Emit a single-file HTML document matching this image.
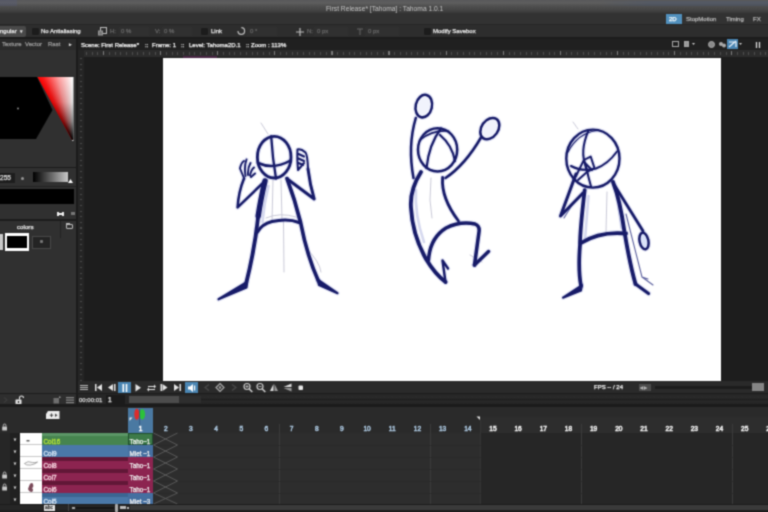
<!DOCTYPE html>
<html><head><meta charset="utf-8"><title>First Release* [Tahoma] : Tahoma 1.0.1</title>
<style>
html,body{margin:0;padding:0;background:#262626;}
body{width:768px;height:512px;overflow:hidden;position:relative;font-family:"Liberation Sans",sans-serif;font-size:7px;color:#e0e0e0;}
.a{position:absolute;}
.t{position:absolute;white-space:nowrap;line-height:8px;height:8px;font-size:6px;color:#e6e6e6;-webkit-text-stroke:0.25px currentColor;}
.d{color:#666;}
.cb{position:absolute;width:7px;height:7px;background:#1c1c1c;border-radius:1px;}
#wrap{position:absolute;left:0;top:0;width:768px;height:512px;overflow:hidden;filter:url(#blr);}
svg{position:absolute;left:0;top:0;}
</style></head><body>
<svg width="0" height="0" style="position:absolute"><filter id="blr" x="0" y="0" width="100%" height="100%" color-interpolation-filters="sRGB"><feConvolveMatrix order="3" kernelMatrix="0.04 0.12 0.04 0.12 0.36 0.12 0.04 0.12 0.04" edgeMode="duplicate" preserveAlpha="true"/></filter></svg>
<div id="wrap">

<div class="a" style="left:0;top:0;width:768px;height:13px;background:linear-gradient(#58585a,#5e5e5e 22%,#505050 45%,#454545 75%,#383838);"></div>
<div class="a" style="left:0;top:0;width:17px;height:6px;background:rgba(80,90,140,0.22);"></div>
<div class="a" style="left:600px;top:1px;width:168px;height:5px;background:linear-gradient(90deg,rgba(60,80,120,0),rgba(60,80,120,0.25) 30%);"></div>
<div class="t" style="left:326px;top:5px;color:#c4c4c4;font-size:6.7px;-webkit-text-stroke:0;">First Release* [Tahoma] : Tahoma 1.0.1</div>
<div class="a" style="left:0;top:13px;width:768px;height:12px;background:#323232;"></div>
<div class="a" style="left:665.5px;top:14.3px;width:16px;height:9.5px;background:#5190bd;"></div>
<div class="t" style="left:669px;top:15px;color:#fff;">2D</div>
<div class="t" style="left:686px;top:15px;color:#b4b4b4;">StopMotion</div>
<div class="t" style="left:726px;top:15px;color:#b4b4b4;">Timing</div>
<div class="t" style="left:753px;top:15px;color:#b4b4b4;">FX</div>

<div class="a" style="left:0;top:24px;width:768px;height:14px;background:#2d2d2d;"></div>
<div class="a" style="left:0;top:24px;width:768px;height:1px;background:#262626;"></div>
<div class="a" style="left:0;top:26px;width:26px;height:11px;background:#494949;border-radius:0 2px 2px 0;"></div>
<div class="t" style="left:0;top:27px;">ngular</div>
<div class="t" style="left:20px;top:27px;font-size:5px;">&#9662;</div>
<div class="cb" style="left:32px;top:28px;"></div>
<div class="t" style="left:41px;top:27px;">No Antialiasing</div>
<div class="t d" style="left:110px;top:27px;">H:</div>
<div class="a" style="left:119px;top:27px;width:30px;height:9px;background:#303030;"></div>
<div class="t d" style="left:121px;top:27px;">0 %</div>
<div class="t d" style="left:155px;top:27px;">V:</div>
<div class="a" style="left:162px;top:27px;width:30px;height:9px;background:#303030;"></div>
<div class="t d" style="left:164px;top:27px;">0 %</div>
<div class="cb" style="left:201px;top:28px;"></div>
<div class="t" style="left:211px;top:27px;">Link</div>
<div class="a" style="left:247px;top:27px;width:30px;height:9px;background:#303030;"></div>
<div class="t d" style="left:250px;top:27px;">0 °</div>
<div class="t d" style="left:307px;top:27px;">N:</div>
<div class="a" style="left:314px;top:27px;width:34px;height:9px;background:#303030;"></div>
<div class="t d" style="left:317px;top:27px;">0 px</div>
<div class="a" style="left:365px;top:27px;width:34px;height:9px;background:#303030;"></div>
<div class="t d" style="left:368px;top:27px;">0 px</div>
<div class="cb" style="left:424px;top:28px;"></div>
<div class="t" style="left:433px;top:27px;">Modify Savebox</div>

<div class="a" style="left:0;top:38px;width:76px;height:12px;background:#2a2a2a;"></div>
<div class="a" style="left:0;top:37px;width:768px;height:1.5px;background:#1b1b1b;"></div>
<div class="a" style="left:78px;top:38px;width:690px;height:12px;background:#202020;"></div>
<div class="a" style="left:0;top:38px;width:768px;height:1px;background:#1c1c1c;"></div>
<div class="t" style="left:2px;top:40px;color:#9a9a9a;">Texture</div>
<div class="t" style="left:25px;top:40px;color:#9a9a9a;">Vector</div>
<div class="t" style="left:48px;top:40px;color:#9a9a9a;">Rast</div>
<div class="t" style="left:69px;top:40px;font-size:5px;color:#ddd;">&#9656;</div>
<div class="t" style="left:81px;top:41px;color:#f0f0f0;">Scene: First Release*</div>
<div class="t" style="left:145px;top:41px;color:#f0f0f0;">::</div>
<div class="t" style="left:152px;top:41px;color:#f0f0f0;">Frame: 1</div>
<div class="t" style="left:181px;top:41px;color:#f0f0f0;">::</div>
<div class="t" style="left:189px;top:41px;color:#f0f0f0;">Level: Tahoma2D.1</div>
<div class="t" style="left:246px;top:41px;color:#f0f0f0;">::</div>
<div class="t" style="left:251px;top:41px;color:#f0f0f0;">Zoom : 113%</div>

<div class="a" style="left:0;top:50px;width:76px;height:344px;background:#303030;"></div>
<div class="a" style="left:76px;top:38px;width:2px;height:368px;background:#1b1b1b;"></div>
<svg width="78" height="150" viewBox="0 0 78 150" style="left:0;top:0;">
 <polygon points="0,77 37,77 52.5,110 36,139 0,139" fill="#000"/>
 <circle cx="18" cy="108.5" r="1" fill="#8a8a8a"/>
 <rect x="72" y="139" width="1.5" height="2" fill="#ccc"/>
</svg>
<div class="a" style="left:37px;top:77px;width:37px;height:63px;clip-path:polygon(0.5px 0,36.5px 0,36.5px 63px,35px 63px);background:linear-gradient(180deg,rgba(0,0,0,0) 0,rgba(0,0,0,0.12) 40%,rgba(0,0,0,0.45) 70%,rgba(0,0,0,0.85) 92%,#000 100%),conic-gradient(from -29.05deg at 35.5px 63px,#ff0000 0deg,#ff1a1a 4deg,#ff9c9c 16deg,#ffffff 29deg,#ffffff 40deg,#ff0000 360deg);"></div>
<div class="a" style="left:0;top:167px;width:76px;height:1px;background:#1a1a1a;"></div>
<div class="a" style="left:0;top:173px;width:15px;height:10px;background:#1d1d1d;"></div>
<div class="t" style="left:0;top:174px;color:#ddd;font-size:6.6px;">255</div>
<div class="a" style="left:21px;top:177px;width:3px;height:3px;border-radius:2px;background:#999;"></div>
<div class="a" style="left:33px;top:172px;width:35px;height:10px;background:linear-gradient(90deg,#000,#1a1a1a 15%,#c8c8c8);"></div>
<svg width="78" height="190" viewBox="0 0 78 190"><polygon points="68,183 70.5,179 73,183" fill="#fff"/></svg>
<div class="a" style="left:0;top:186px;width:76px;height:1px;background:#222;"></div>
<div class="a" style="left:0;top:189px;width:74px;height:15px;background:#000;"></div>
<div class="a" style="left:57px;top:213px;width:7px;height:2px;background:#eee;"></div>
<div class="a" style="left:57px;top:212px;width:2px;height:4px;background:#eee;"></div>
<div class="a" style="left:62px;top:212px;width:2px;height:4px;background:#eee;"></div>
<div class="a" style="left:71px;top:212px;width:4px;height:3px;background:#777;"></div>
<div class="a" style="left:0;top:219px;width:76px;height:2px;background:#1c1c1c;"></div>
<div class="t" style="left:17px;top:223px;color:#e8e8e8;font-size:6.2px;">colors</div>
<div class="a" style="left:60px;top:221px;width:1px;height:17px;background:#222;"></div>
<div class="a" style="left:66px;top:224px;width:7px;height:5px;border:1px solid #bbb;border-radius:1px;box-sizing:border-box;"></div>
<div class="a" style="left:66px;top:223px;width:4px;height:2px;background:#bbb;"></div>
<div class="a" style="left:0;top:234px;width:3px;height:16px;background:#c8c8c8;"></div>
<div class="a" style="left:5px;top:233px;width:24px;height:18px;background:#fff;"></div>
<div class="a" style="left:7px;top:236px;width:20px;height:12px;background:#000;"></div>
<div class="a" style="left:32px;top:236px;width:19px;height:13px;background:#242424;border:1px solid #484848;box-sizing:border-box;"></div>
<div class="a" style="left:40px;top:240px;width:3px;height:3px;background:#777;border-radius:1px;"></div>

<div class="a" style="left:78px;top:50px;width:690px;height:331px;background:#1d1d1d;"></div>
<div class="a" style="left:78px;top:50px;width:690px;height:7px;background:#2c2c2c;"></div>
<div class="a" style="left:78px;top:50px;width:6px;height:331px;background:#252525;"></div>
<div class="a" style="left:85.8px;top:52px;width:683px;height:3px;background:repeating-linear-gradient(90deg,#6a6a6a 0 1px,transparent 1px 5.71px);opacity:.55;"></div>
<div class="a" style="left:102.9px;top:51px;width:665px;height:4px;background:repeating-linear-gradient(90deg,#9a9a9a 0 1.2px,transparent 1.2px 57.1px);opacity:.65;"></div>
<div class="a" style="left:80px;top:58px;width:2px;height:323px;background:repeating-linear-gradient(180deg,#606060 0 1px,transparent 1px 5.65px);opacity:.6;"></div>
<div class="a" style="left:163.3px;top:58.3px;width:557.5px;height:322.4px;background:#fff;"></div>
<div class="a" style="left:183px;top:55.5px;width:34px;height:2.5px;background:rgba(140,40,130,0.35);"></div>
<svg width="768" height="512" viewBox="0 0 768 512" fill="none" stroke="#171b68" stroke-linecap="round" stroke-linejoin="round">
<g stroke="#c4c4d4" stroke-width="0.9">
 <path d="M261 123 L268 134"/>
 <path d="M283.5 222 L284 272"/>
 <path d="M273 180 L272 222 M281 180 L282 220 M266 218 Q280 212 296 217"/>
 <path d="M431 178 L430 200 L432 218"/>
 <path d="M573 122 L578 129"/>
 <path d="M607 192 L606 232"/>
 <path d="M306 248 Q320 262 321 272"/>
 <path d="M470 255 L482 262"/>
</g>
<g stroke="#b4b9e2" stroke-width="2.6" stroke-opacity="0.55">
 <path d="M268.5 186 Q264 204 262.5 222"/>
 <path d="M292 190 Q296 205 298 218"/>
 <path d="M416 190 Q414.5 215 424 242"/>
 <path d="M588.5 196 L585 240"/>
 <path d="M617 196 L621.5 228"/>
</g>
<g stroke="#5d629f" stroke-width="1.1">
 <path d="M564 218 L574 202"/>
 <path d="M626 214 Q635 250 642 277 L653 285 M642 277 L648 279"/>
</g>
<g><ellipse cx="274.2" cy="157.2" rx="16.8" ry="20.8" stroke="#8a92d6" stroke-opacity="0.22" stroke-width="5.2"/><path d="M271.2 136.5 Q272.5 158 276 178.5" stroke="#8a92d6" stroke-opacity="0.22" stroke-width="4.7"/><path d="M258 163 Q273.5 170 290.5 160.5" stroke="#8a92d6" stroke-opacity="0.22" stroke-width="4.9"/><path d="M264.5 181.5 L237.6 207.4 Q238.5 192 244 178.5" stroke="#8a92d6" stroke-opacity="0.22" stroke-width="4.9"/><path d="M244.2 178.5 L240 168.5 Q241 163 244 161 M245.5 176 Q244 166 246.5 159.5 M248 175 Q247.5 168 250.5 163 M250 175.5 Q251 170 254 167.5 M251 177 L255 173.5" stroke="#8a92d6" stroke-opacity="0.22" stroke-width="4.3"/><path d="M288 179.5 L314.2 199 Q310 185 308 169" stroke="#8a92d6" stroke-opacity="0.22" stroke-width="5.3"/><path d="M308 169 Q307.5 155 305.5 152.5 Q301 148.5 297.5 149.5 Q297 158 298 170 L304 163 M298.5 154 L304 156.5 M298.5 158.5 L304 161 M298.5 163 L303 165" stroke="#8a92d6" stroke-opacity="0.22" stroke-width="4.4"/><path d="M265 181 Q260.5 200 258.2 216" stroke="#8a92d6" stroke-opacity="0.22" stroke-width="7.8"/><path d="M258.2 216 Q255 248 246 284" stroke="#8a92d6" stroke-opacity="0.22" stroke-width="6.2"/><path d="M247 282 L218.5 299.3 L246.5 287.5 Z" stroke="#8a92d6" stroke-opacity="0.22" stroke-width="4.6" fill="#8a92d6" fill-opacity="0.22"/><path d="M287 178.5 Q295 200 300.5 222 Q307 256 318.3 280.7" stroke="#8a92d6" stroke-opacity="0.22" stroke-width="6.0"/><path d="M317.5 279.5 L337.5 293.2 L319 285 Z" stroke="#8a92d6" stroke-opacity="0.22" stroke-width="4.6" fill="#8a92d6" fill-opacity="0.22"/><path d="M257.5 232 Q262 224 272 221.5 Q288 218 299 222.5" stroke="#8a92d6" stroke-opacity="0.22" stroke-width="5.4"/></g>
<g><ellipse cx="423.8" cy="106.1" rx="8.1" ry="11.4" transform="rotate(13 423.8 106.1)" stroke="#8a92d6" stroke-opacity="0.22" stroke-width="4.9"/><path d="M415.8 118 Q407.5 146 413.5 178" stroke="#8a92d6" stroke-opacity="0.22" stroke-width="4.9"/><ellipse cx="437.6" cy="149.8" rx="19.6" ry="21.6" stroke="#8a92d6" stroke-opacity="0.22" stroke-width="4.9"/><path d="M441 128.5 Q429 144 426.5 168" stroke="#8a92d6" stroke-opacity="0.22" stroke-width="4.6"/><path d="M440 135 Q452 145 455 161" stroke="#8a92d6" stroke-opacity="0.22" stroke-width="4.6"/><path d="M420 140 Q432 130 448 131" stroke="#8a92d6" stroke-opacity="0.22" stroke-width="4.0"/><ellipse cx="489.8" cy="128.6" rx="8.3" ry="11.6" transform="rotate(35 489.8 128.6)" stroke="#8a92d6" stroke-opacity="0.22" stroke-width="4.9"/><path d="M481 137.5 Q465 165 445.5 178" stroke="#8a92d6" stroke-opacity="0.22" stroke-width="4.9"/><path d="M421 172 Q409.5 190 411 208 Q412.5 235 426 259 Q435 274 445.5 282" stroke="#8a92d6" stroke-opacity="0.22" stroke-width="6.2"/><path d="M445.5 282 L442.5 260.5 L448 268.5" stroke="#8a92d6" stroke-opacity="0.22" stroke-width="4.8"/><path d="M442.6 177.5 Q441 198 458.5 221" stroke="#8a92d6" stroke-opacity="0.22" stroke-width="5.2"/><path d="M428.5 260 Q430 238 446 228 Q460 221 475 224 Q480 226 479 232 L474.5 265" stroke="#8a92d6" stroke-opacity="0.22" stroke-width="5.9"/><path d="M474.5 265 L488.5 251.5" stroke="#8a92d6" stroke-opacity="0.22" stroke-width="5.8"/></g>
<g><ellipse cx="592.9" cy="158.6" rx="26.6" ry="29.0" stroke="#8a92d6" stroke-opacity="0.22" stroke-width="4.8"/><path d="M588.2 131.2 Q579.5 152 586 166 Q588 176 591 186.5" stroke="#8a92d6" stroke-opacity="0.22" stroke-width="4.4"/><path d="M571 166 Q582 172 596 168.5 Q608 164 617 151.5" stroke="#8a92d6" stroke-opacity="0.22" stroke-width="4.4"/><path d="M568 152 Q578 133 597 130.5" stroke="#8a92d6" stroke-opacity="0.22" stroke-width="3.6"/><path d="M583.9 160 L590.7 156.6 L594.5 168.1 L587 172 Z M583.9 160 L576 176 M587 172 L578 180 M585 163 L592 170" stroke="#8a92d6" stroke-opacity="0.22" stroke-width="4.3"/><path d="M576 174 L560.5 216 L583 193" stroke="#8a92d6" stroke-opacity="0.22" stroke-width="5.4"/><path d="M584.7 190 Q580 230 580 245 Q578 270 581 286" stroke="#8a92d6" stroke-opacity="0.22" stroke-width="6.1"/><path d="M582 285 L563 297.7 L581 290.5 Z" stroke="#8a92d6" stroke-opacity="0.22" stroke-width="4.4" fill="#8a92d6" fill-opacity="0.22"/><path d="M613 182 Q620 200 624.5 232 Q630 265 635.5 284" stroke="#8a92d6" stroke-opacity="0.22" stroke-width="6.2"/><path d="M635.5 284 L648.5 293.5" stroke="#8a92d6" stroke-opacity="0.22" stroke-width="5.6"/><path d="M581 243 Q600 231 626 233.5" stroke="#8a92d6" stroke-opacity="0.22" stroke-width="6.2"/><path d="M615 186 L643 231" stroke="#8a92d6" stroke-opacity="0.22" stroke-width="5.2"/><ellipse cx="644" cy="241" rx="4.4" ry="8.4" transform="rotate(-12 644 241)" stroke="#8a92d6" stroke-opacity="0.22" stroke-width="4.9"/></g>
<g><ellipse cx="274.2" cy="157.2" rx="16.8" ry="20.8" stroke-width="2.8"/>
<path d="M271.2 136.5 Q272.5 158 276 178.5" stroke-width="2.3"/>
<path d="M258 163 Q273.5 170 290.5 160.5" stroke-width="2.5"/>
<path d="M264.5 181.5 L237.6 207.4 Q238.5 192 244 178.5" stroke-width="2.5"/>
<path d="M244.2 178.5 L240 168.5 Q241 163 244 161 M245.5 176 Q244 166 246.5 159.5 M248 175 Q247.5 168 250.5 163 M250 175.5 Q251 170 254 167.5 M251 177 L255 173.5" stroke-width="1.9"/>
<path d="M288 179.5 L314.2 199 Q310 185 308 169" stroke-width="2.9"/>
<path d="M308 169 Q307.5 155 305.5 152.5 Q301 148.5 297.5 149.5 Q297 158 298 170 L304 163 M298.5 154 L304 156.5 M298.5 158.5 L304 161 M298.5 163 L303 165" stroke-width="2.0"/>
<path d="M265 181 Q260.5 200 258.2 216" stroke-width="5.4"/>
<path d="M258.2 216 Q255 248 246 284" stroke-width="3.8"/>
<path d="M247 282 L218.5 299.3 L246.5 287.5 Z" stroke-width="2.2" fill="#171b68"/>
<path d="M287 178.5 Q295 200 300.5 222 Q307 256 318.3 280.7" stroke-width="3.6"/>
<path d="M317.5 279.5 L337.5 293.2 L319 285 Z" stroke-width="2.2" fill="#171b68"/>
<path d="M257.5 232 Q262 224 272 221.5 Q288 218 299 222.5" stroke-width="3.0"/></g>
<g><ellipse cx="423.8" cy="106.1" rx="8.1" ry="11.4" transform="rotate(13 423.8 106.1)" stroke-width="2.5" fill="#f1f3fc"/>
<path d="M415.8 118 Q407.5 146 413.5 178" stroke-width="2.5"/>
<ellipse cx="437.6" cy="149.8" rx="19.6" ry="21.6" stroke-width="2.5"/>
<path d="M441 128.5 Q429 144 426.5 168" stroke-width="2.2"/>
<path d="M440 135 Q452 145 455 161" stroke-width="2.2"/>
<path d="M420 140 Q432 130 448 131" stroke-width="1.6"/>
<ellipse cx="489.8" cy="128.6" rx="8.3" ry="11.6" transform="rotate(35 489.8 128.6)" stroke-width="2.5" fill="#f1f3fc"/>
<path d="M481 137.5 Q465 165 445.5 178" stroke-width="2.5"/>
<path d="M421 172 Q409.5 190 411 208 Q412.5 235 426 259 Q435 274 445.5 282" stroke-width="3.8"/>
<path d="M445.5 282 L442.5 260.5 L448 268.5" stroke-width="2.4"/>
<path d="M442.6 177.5 Q441 198 458.5 221" stroke-width="2.8"/>
<path d="M428.5 260 Q430 238 446 228 Q460 221 475 224 Q480 226 479 232 L474.5 265" stroke-width="3.5"/>
<path d="M474.5 265 L488.5 251.5" stroke-width="3.4"/></g>
<g><ellipse cx="592.9" cy="158.6" rx="26.6" ry="29.0" stroke-width="2.4"/>
<path d="M588.2 131.2 Q579.5 152 586 166 Q588 176 591 186.5" stroke-width="2.0"/>
<path d="M571 166 Q582 172 596 168.5 Q608 164 617 151.5" stroke-width="2.0"/>
<path d="M568 152 Q578 133 597 130.5" stroke-width="1.2"/>
<path d="M583.9 160 L590.7 156.6 L594.5 168.1 L587 172 Z M583.9 160 L576 176 M587 172 L578 180 M585 163 L592 170" stroke-width="1.9"/>
<path d="M576 174 L560.5 216 L583 193" stroke-width="3.0"/>
<path d="M584.7 190 Q580 230 580 245 Q578 270 581 286" stroke-width="3.7"/>
<path d="M582 285 L563 297.7 L581 290.5 Z" stroke-width="2.0" fill="#171b68"/>
<path d="M613 182 Q620 200 624.5 232 Q630 265 635.5 284" stroke-width="3.8"/>
<path d="M635.5 284 L648.5 293.5" stroke-width="3.2"/>
<path d="M581 243 Q600 231 626 233.5" stroke-width="3.8"/>
<path d="M615 186 L643 231" stroke-width="2.8"/>
<ellipse cx="644" cy="241" rx="4.4" ry="8.4" transform="rotate(-12 644 241)" stroke-width="2.5" fill="#dbe3fa"/></g>
</svg>
<svg width="768" height="60" viewBox="0 0 768 60">
 <g fill="none" stroke="#a8a8a8" stroke-width="1">
  <rect x="672.5" y="41.5" width="6" height="5"/>
  <rect x="684.5" y="41.5" width="4" height="5" fill="#999"/>
  <path d="M692 43 h3 l-1.5 2z" fill="#ccc" stroke="none"/>
  <circle cx="711.5" cy="44.5" r="3" fill="#888"/>
  <circle cx="721" cy="44" r="2" fill="#aaa" stroke="none"/><circle cx="724" cy="45.5" r="2" fill="#aaa" stroke="none"/>
  <rect x="727" y="39" width="11" height="10" fill="#4a85b2" stroke="none"/>
  <path d="M729 47 L736 41 M729 42 h7 v5" stroke="#e8f0f8" stroke-width="1.2"/>
  <path d="M739 43 h3 l-1.5 2z" fill="#ccc" stroke="none"/>
  <path d="M756.5 42 v6 M759.5 42 v6" stroke="#ddd" stroke-width="1.3"/>
 </g>
</svg>

<svg width="768" height="40" viewBox="0 0 768 40">
 <g fill="none" stroke="#bdbdbd" stroke-width="1">
  <rect x="100.5" y="27.5" width="6" height="6"/>
  <rect x="98.5" y="31" width="4" height="4" fill="#777" stroke="#999"/>
  <path d="M238 31 a3.3 3.3 0 1 0 3.3 -3.3" stroke-width="1.2"/>
  <path d="M300 28 v8 M296 32 h8" stroke-width="1.2"/>
  <path d="M357 29 h6 M360 29 v6" stroke="#666"/>
 </g>
</svg>

<div class="a" style="left:78px;top:381px;width:690px;height:13px;background:#2a2a2a;"></div>
<div class="a" style="left:118px;top:382px;width:13px;height:12px;background:#4a85b2;"></div>
<div class="a" style="left:185px;top:382px;width:13px;height:12px;background:#4a85b2;"></div>
<svg width="768" height="512" viewBox="0 0 768 512">
 <g fill="#e4e4e4" stroke="none">
  <path d="M80 385 h8 v1 h-8z M80 387 h8 v1 h-8z M80 389 h8 v1 h-8z" fill="#bbb"/>
  <path d="M95 384 h1.5 v7 h-1.5z M102 384 v7 l-5 -3.5z"/>
  <path d="M113 384 v7 l-5 -3.5z M114 384 h1.5 v7 h-1.5z"/>
  <path d="M122.5 384 h1.6 v8 h-1.6z M125.700 384 h1.6 v8 h-1.6z" fill="#fff"/>
  <path d="M135.5 384 v7.5 l5.5 -3.750z"/>
  <path d="M148 386 h6 v-1.5 l2 2 l-2 2 v-1.5 h-6z M155 390 h-6 v1.5 l-2 -2 l2 -2 v1.5 h6z"/>
  <path d="M160.5 384 h1.5 v7 h-1.5z M162.5 384 v7 l5 -3.5z"/>
  <path d="M174 384 v7 l5 -3.5z M179.5 384 h1.5 v7 h-1.5z"/>
  <path d="M188 386.5 h2 l3 -2.5 v8 l-3 -2.5 h-2z M194 385.5 h1.2 v5 h-1.2z" fill="#fff"/>
  <path d="M209 384.5 l-4 3 l4 3" fill="none" stroke="#4a4a4a" stroke-width="1.2"/>
  <path d="M220 383.5 l4 4 l-4 4 l-4 -4z" fill="none" stroke="#aaa" stroke-width="1.2"/>
  <rect x="218.8" y="386.3" width="2.4" height="2.4" fill="#999"/>
  <path d="M232 384.5 l4 3 l-4 3" fill="none" stroke="#4a4a4a" stroke-width="1.2"/>
  <circle cx="247" cy="386.5" r="3" fill="none" stroke="#ccc" stroke-width="1.2"/>
  <path d="M249.3 389 l3 3" stroke="#ccc" stroke-width="1.6"/>
  <path d="M245.5 386.5 h3 M247 385 v3" stroke="#ccc" stroke-width="0.8"/>
  <circle cx="260" cy="386.5" r="3" fill="none" stroke="#ccc" stroke-width="1.2"/>
  <path d="M262.3 389 l3 3" stroke="#ccc" stroke-width="1.6"/>
  <path d="M258.5 386.5 h3" stroke="#ccc" stroke-width="0.8"/>
  <path d="M273.5 384 v7 h-3.5z" fill="#ddd"/><path d="M274.5 384 v7 h3.5z" fill="#999"/>
  <path d="M283.5 387 h8 v-3.5z" fill="#ddd"/><path d="M283.5 388 h8 v3.5z" fill="#999"/>
  <rect x="298.5" y="385.5" width="4.5" height="4.5" rx="1" fill="#e8e8e8"/>
 </g>
</svg>
<div class="t" style="left:594px;top:383px;color:#eee;">FPS -- / 24</div>
<div class="a" style="left:639px;top:384px;width:12px;height:7px;background:#4c4c4c;"></div>
<div class="t" style="left:640px;top:384px;color:#bbb;font-size:4px;line-height:7px;">&#9664;&nbsp;&#9654;</div>
<div class="a" style="left:655px;top:386px;width:98px;height:3px;background:#1c1c1c;"></div>
<div class="a" style="left:752px;top:383px;width:12px;height:8px;background:#858585;"></div>

<div class="a" style="left:0;top:393px;width:768px;height:1px;background:#1c1c1c;"></div>
<div class="a" style="left:0;top:394px;width:76px;height:12px;background:#2e2e2e;"></div>
<div class="a" style="left:78px;top:394px;width:690px;height:12px;background:#262626;"></div>
<div class="a" style="left:200px;top:394px;width:568px;height:12px;background:linear-gradient(#252525,#2a2a2a 30%,#1f1f1f 45%,#282828 60%,#222 100%);"></div>
<div class="t" style="left:79px;top:396px;color:#ddd;font-size:6px;">00:00:01</div>
<div class="a" style="left:106px;top:395px;width:19px;height:9px;background:#1b1b1b;"></div>
<div class="t" style="left:108px;top:396px;color:#eee;font-size:6.6px;">1</div>
<div class="a" style="left:129px;top:396px;width:50px;height:7px;background:#4c4c4c;"></div>
<div class="a" style="left:179px;top:396px;width:22px;height:7px;background:#2e2e2e;"></div>
<svg width="80" height="512" viewBox="0 0 80 512">
 <g fill="#e8e8e8">
  <rect x="15.5" y="399.5" width="6" height="4.5" rx="0.5"/>
  <path d="M19.5 399.5 v-1.5 a2 2 0 0 1 4 0" fill="none" stroke="#e8e8e8" stroke-width="1.1"/>
  <rect x="17.8" y="401" width="1.4" height="2" fill="#333"/>
  <rect x="53.5" y="398" width="5.5" height="5.5" fill="#6e6e6e"/>
  <rect x="59" y="396.5" width="1.5" height="1.5" fill="#999"/>
  <path d="M66 397 h8 v1.2 h-8z M66 399.5 h8 v1.2 h-8z M66 402 h8 v1.2 h-8z" fill="#888"/>
  <path d="M4 397.5 l3 2.5 l-3 2.5" fill="none" stroke="#3c3c3c" stroke-width="1.2"/>
 </g>
</svg>
<div class="a" style="left:0;top:404px;width:768px;height:3px;background:#1b1b1b;"></div>

<div class="a" style="left:0;top:407px;width:768px;height:105px;background:#2b2b2b;"></div>
<div class="a" style="left:0;top:407px;width:128px;height:26px;background:#2a2a2a;"></div>
<div class="a" style="left:153px;top:407px;width:615px;height:10px;background:#2a2a2a;"></div>
<div class="a" style="left:153px;top:417px;width:327px;height:16px;background:#2a2a2a;"></div>
<div class="a" style="left:480px;top:417px;width:288px;height:16px;background:#2d2d2d;"></div>
<div class="a" style="left:153px;top:433px;width:327px;height:71px;background:#2d2d2d;"></div>
<div class="a" style="left:480px;top:433px;width:288px;height:71px;background:#262626;"></div>
<div class="a" style="left:128px;top:408px;width:25px;height:25px;background:#4a79a2;"></div>
<div class="a" style="left:0;top:433px;width:10px;height:71px;background:#262626;"></div>
<div class="a" style="left:10px;top:433px;width:10px;height:71px;background:#202020;"></div>
<div class="a" style="left:278.5px;top:424px;width:1px;height:80px;background:#3b3b3b;"></div>
<div class="a" style="left:429.5px;top:424px;width:1px;height:80px;background:#3b3b3b;"></div>
<div class="a" style="left:580.6px;top:424px;width:1px;height:80px;background:#3b3b3b;"></div>
<div class="a" style="left:731.6px;top:424px;width:1px;height:80px;background:#3b3b3b;"></div>
<div class="a" style="left:479.5px;top:420px;width:1px;height:84px;background:#353535;"></div>
<div class="a" style="left:153px;top:445px;width:615px;height:1px;background:#262626;opacity:.6;"></div>
<div class="a" style="left:153px;top:457px;width:615px;height:1px;background:#262626;opacity:.6;"></div>
<div class="a" style="left:153px;top:469px;width:615px;height:1px;background:#262626;opacity:.6;"></div>
<div class="a" style="left:153px;top:481px;width:615px;height:1px;background:#262626;opacity:.6;"></div>
<div class="a" style="left:153px;top:493px;width:615px;height:1px;background:#262626;opacity:.6;"></div>
<div class="t" style="left:130.6px;top:425px;width:20px;text-align:center;color:#ffffff;font-size:6.6px;-webkit-text-stroke:0.5px #ffffff;">1</div>
<div class="t" style="left:155.8px;top:425px;width:20px;text-align:center;color:#a9c4dc;font-size:6.6px;-webkit-text-stroke:0.5px #a9c4dc;">2</div>
<div class="t" style="left:180.9px;top:425px;width:20px;text-align:center;color:#a9c4dc;font-size:6.6px;-webkit-text-stroke:0.5px #a9c4dc;">3</div>
<div class="t" style="left:206.1px;top:425px;width:20px;text-align:center;color:#a9c4dc;font-size:6.6px;-webkit-text-stroke:0.5px #a9c4dc;">4</div>
<div class="t" style="left:231.3px;top:425px;width:20px;text-align:center;color:#a9c4dc;font-size:6.6px;-webkit-text-stroke:0.5px #a9c4dc;">5</div>
<div class="t" style="left:256.4px;top:425px;width:20px;text-align:center;color:#a9c4dc;font-size:6.6px;-webkit-text-stroke:0.5px #a9c4dc;">6</div>
<div class="t" style="left:281.6px;top:425px;width:20px;text-align:center;color:#a9c4dc;font-size:6.6px;-webkit-text-stroke:0.5px #a9c4dc;">7</div>
<div class="t" style="left:306.8px;top:425px;width:20px;text-align:center;color:#a9c4dc;font-size:6.6px;-webkit-text-stroke:0.5px #a9c4dc;">8</div>
<div class="t" style="left:331.9px;top:425px;width:20px;text-align:center;color:#a9c4dc;font-size:6.6px;-webkit-text-stroke:0.5px #a9c4dc;">9</div>
<div class="t" style="left:357.1px;top:425px;width:20px;text-align:center;color:#a9c4dc;font-size:6.6px;-webkit-text-stroke:0.5px #a9c4dc;">10</div>
<div class="t" style="left:382.3px;top:425px;width:20px;text-align:center;color:#a9c4dc;font-size:6.6px;-webkit-text-stroke:0.5px #a9c4dc;">11</div>
<div class="t" style="left:407.5px;top:425px;width:20px;text-align:center;color:#a9c4dc;font-size:6.6px;-webkit-text-stroke:0.5px #a9c4dc;">12</div>
<div class="t" style="left:432.6px;top:425px;width:20px;text-align:center;color:#a9c4dc;font-size:6.6px;-webkit-text-stroke:0.5px #a9c4dc;">13</div>
<div class="t" style="left:457.8px;top:425px;width:20px;text-align:center;color:#a9c4dc;font-size:6.6px;-webkit-text-stroke:0.5px #a9c4dc;">14</div>
<div class="t" style="left:483.0px;top:425px;width:20px;text-align:center;color:#f0f0f0;font-size:6.6px;-webkit-text-stroke:0.5px #f0f0f0;">15</div>
<div class="t" style="left:508.1px;top:425px;width:20px;text-align:center;color:#f0f0f0;font-size:6.6px;-webkit-text-stroke:0.5px #f0f0f0;">16</div>
<div class="t" style="left:533.3px;top:425px;width:20px;text-align:center;color:#f0f0f0;font-size:6.6px;-webkit-text-stroke:0.5px #f0f0f0;">17</div>
<div class="t" style="left:558.5px;top:425px;width:20px;text-align:center;color:#f0f0f0;font-size:6.6px;-webkit-text-stroke:0.5px #f0f0f0;">18</div>
<div class="t" style="left:583.6px;top:425px;width:20px;text-align:center;color:#f0f0f0;font-size:6.6px;-webkit-text-stroke:0.5px #f0f0f0;">19</div>
<div class="t" style="left:608.8px;top:425px;width:20px;text-align:center;color:#f0f0f0;font-size:6.6px;-webkit-text-stroke:0.5px #f0f0f0;">20</div>
<div class="t" style="left:634.0px;top:425px;width:20px;text-align:center;color:#f0f0f0;font-size:6.6px;-webkit-text-stroke:0.5px #f0f0f0;">21</div>
<div class="t" style="left:659.2px;top:425px;width:20px;text-align:center;color:#f0f0f0;font-size:6.6px;-webkit-text-stroke:0.5px #f0f0f0;">22</div>
<div class="t" style="left:684.3px;top:425px;width:20px;text-align:center;color:#f0f0f0;font-size:6.6px;-webkit-text-stroke:0.5px #f0f0f0;">23</div>
<div class="t" style="left:709.5px;top:425px;width:20px;text-align:center;color:#f0f0f0;font-size:6.6px;-webkit-text-stroke:0.5px #f0f0f0;">24</div>
<div class="t" style="left:734.7px;top:425px;width:20px;text-align:center;color:#f0f0f0;font-size:6.6px;-webkit-text-stroke:0.5px #f0f0f0;">25</div>
<div class="t" style="left:759.8px;top:425px;width:20px;text-align:center;color:#f0f0f0;font-size:6.6px;-webkit-text-stroke:0.5px #f0f0f0;">26</div>
<div class="a" style="left:20px;top:433px;width:22px;height:12px;background:#fff;"></div>
<div class="a" style="left:20px;top:444px;width:22px;height:1px;background:#c8c8c8;"></div>
<div class="a" style="left:42px;top:433px;width:86px;height:12px;background:linear-gradient(#5b9666 0 3px,#46844f 3px);"></div>
<div class="t" style="left:43.5px;top:437.5px;color:#b4e23a;font-size:6.4px;-webkit-text-stroke:0.350px #b4e23a;">Col16</div>
<div class="a" style="left:128px;top:433px;width:25px;height:12px;background:#3d7a49;"></div>
<div class="a" style="left:128px;top:433px;width:25px;height:12px;box-sizing:border-box;border:1.5px solid #1f4d2d;"></div>
<div class="t" style="left:129.5px;top:437.5px;color:#f0f0f0;font-size:6.3px;">Taho~1</div>
<div class="t" style="left:13px;top:436px;color:#d8d8d8;font-size:4px;">&#9660;</div>
<div class="a" style="left:20px;top:445px;width:22px;height:12px;background:#fff;"></div>
<div class="a" style="left:20px;top:456px;width:22px;height:1px;background:#c8c8c8;"></div>
<div class="a" style="left:42px;top:445px;width:86px;height:12px;background:linear-gradient(#4a78a8 0 3.6px,#4a78a8 3.6px);"></div>
<div class="t" style="left:43.5px;top:449.5px;color:#d4e4f4;font-size:6.4px;-webkit-text-stroke:0.350px #d4e4f4;">Col9</div>
<div class="a" style="left:128px;top:445px;width:25px;height:12px;background:#456fa0;"></div>
<div class="t" style="left:129.5px;top:449.5px;color:#f0f0f0;font-size:6.3px;">Miet ~1</div>
<div class="t" style="left:13px;top:448px;color:#d8d8d8;font-size:4px;">&#9660;</div>
<div class="a" style="left:20px;top:457px;width:22px;height:12px;background:#fff;"></div>
<div class="a" style="left:20px;top:468px;width:22px;height:1px;background:#c8c8c8;"></div>
<div class="a" style="left:42px;top:457px;width:86px;height:12px;background:linear-gradient(#621737 0 3.6px,#8c2450 3.6px);"></div>
<div class="t" style="left:43.5px;top:461.5px;color:#f4d0dc;font-size:6.4px;-webkit-text-stroke:0.350px #f4d0dc;">Col8</div>
<div class="a" style="left:128px;top:457px;width:25px;height:12px;background:#8c2450;"></div>
<div class="t" style="left:129.5px;top:461.5px;color:#f0f0f0;font-size:6.3px;">Taho~1</div>
<div class="t" style="left:13px;top:460px;color:#d8d8d8;font-size:4px;">&#9660;</div>
<div class="a" style="left:20px;top:469px;width:22px;height:12px;background:#fff;"></div>
<div class="a" style="left:20px;top:480px;width:22px;height:1px;background:#c8c8c8;"></div>
<div class="a" style="left:42px;top:469px;width:86px;height:12px;background:linear-gradient(#621737 0 3.6px,#8c2450 3.6px);"></div>
<div class="t" style="left:43.5px;top:473.5px;color:#f4d0dc;font-size:6.4px;-webkit-text-stroke:0.350px #f4d0dc;">Col7</div>
<div class="a" style="left:128px;top:469px;width:25px;height:12px;background:#8c2450;"></div>
<div class="t" style="left:129.5px;top:473.5px;color:#f0f0f0;font-size:6.3px;">Taho~1</div>
<div class="t" style="left:13px;top:472px;color:#d8d8d8;font-size:4px;">&#9660;</div>
<div class="a" style="left:20px;top:481px;width:22px;height:12px;background:#fff;"></div>
<div class="a" style="left:20px;top:492px;width:22px;height:1px;background:#c8c8c8;"></div>
<div class="a" style="left:42px;top:481px;width:86px;height:12px;background:linear-gradient(#621737 0 3.6px,#8c2450 3.6px);"></div>
<div class="t" style="left:43.5px;top:485.5px;color:#f4d0dc;font-size:6.4px;-webkit-text-stroke:0.350px #f4d0dc;">Col6</div>
<div class="a" style="left:128px;top:481px;width:25px;height:12px;background:#8c2450;"></div>
<div class="t" style="left:129.5px;top:485.5px;color:#f0f0f0;font-size:6.3px;">Taho~1</div>
<div class="t" style="left:13px;top:484px;color:#d8d8d8;font-size:4px;">&#9660;</div>
<div class="a" style="left:20px;top:493px;width:22px;height:11px;background:#fff;"></div>
<div class="a" style="left:20px;top:504px;width:22px;height:1px;background:#c8c8c8;"></div>
<div class="a" style="left:42px;top:493px;width:86px;height:11px;background:linear-gradient(#3c6592 0 3.6px,#4a78a8 3.6px);"></div>
<div class="t" style="left:43.5px;top:497.5px;color:#d4e4f4;font-size:6.4px;-webkit-text-stroke:0.350px #d4e4f4;">Col5</div>
<div class="a" style="left:128px;top:493px;width:25px;height:11px;background:#456fa0;"></div>
<div class="t" style="left:129.5px;top:497.5px;color:#f0f0f0;font-size:6.3px;">Miet ~3</div>
<div class="t" style="left:13px;top:496px;color:#d8d8d8;font-size:4px;">&#9660;</div>

<svg width="768" height="512" viewBox="0 0 768 512">
 <g fill="none" stroke="#5c5c5c" stroke-width="0.9">
  <path d="M153.5 433 L177.5 445 L153.5 457 L177.5 469 L153.5 481 L177.5 493 L153.5 504"/>
  <path d="M177.5 433 L153.5 445 L177.5 457 L153.5 469 L177.5 481 L153.5 493 L177.5 504"/>
 </g>
 <!-- onion skin markers -->
 <ellipse cx="136.8" cy="414.2" rx="2.5" ry="5.6" fill="#dd2c2c"/>
 <ellipse cx="142.2" cy="414.2" rx="2.9" ry="5.3" fill="#2cc23a"/>
 <path d="M139.1 409 h1 v16 h-1z" fill="#33507a" opacity=".8"/>
 <path d="M129.5 417.5 l3 0 l-3 3.5z" fill="#e8e8e8"/>
 <path d="M476.5 416.5 h3.5 v3.5z" fill="#e0e0e0"/>
 <!-- camera toggle icon -->
 <path d="M48 411 h11.5 v8 h-13.5 v-5z" fill="#ececec"/>
 <path d="M51.5 413.5 v3.5 M49.8 415.2 h3.5" stroke="#444" stroke-width="1"/>
 <path d="M55 413.5 l2.5 1.8 l-2.5 1.8z" fill="#444"/>
 <!-- locks -->
 <g fill="#c8c8c8">
  <rect x="2.2" y="426.5" width="4.8" height="4" rx="0.5"/><path d="M3.3 426.5 v-1.2 a1.3 1.3 0 0 1 2.6 0 v1.2" fill="none" stroke="#c8c8c8" stroke-width="0.9"/>
  <rect x="2.2" y="474.5" width="4.8" height="4" rx="0.5"/><path d="M3.3 474.5 v-1.2 a1.3 1.3 0 0 1 2.6 0 v1.2" fill="none" stroke="#c8c8c8" stroke-width="0.9"/>
  <rect x="2.2" y="486.5" width="4.8" height="4" rx="0.5"/><path d="M3.3 486.5 v-1.2 a1.3 1.3 0 0 1 2.6 0 v1.2" fill="none" stroke="#c8c8c8" stroke-width="0.9"/>
 </g>
 <!-- thumbnails -->
 <path d="M26.5 440.8 h3" stroke="#333" stroke-width="1.2"/>
 <path d="M24.5 463.5 q3 -3 8 -1 q2.5 0.8 5 -0.5 q-3 2.5 -7 3 q-4.5 0.5 -6 -1.5z" fill="none" stroke="#808080" stroke-width="0.700"/>
 <path d="M30 484 q2 -2 3 0 q1 3 -1 4 q2 2 0 4 q-3 0 -4 -3 q1 -3 2 -5z" fill="#7a4a5a"/>
</svg>

<div class="a" style="left:0;top:504px;width:768px;height:8px;background:#262626;"></div>
<div class="a" style="left:0;top:503.5px;width:768px;height:1px;background:#1c1c1c;"></div>
<div class="a" style="left:130px;top:505px;width:638px;height:5px;background:#3a3a3a;"></div>
<div class="a" style="left:0;top:510px;width:768px;height:2px;background:#1e1e1e;"></div>
<div class="a" style="left:44px;top:504.5px;width:11px;height:6px;background:#e8e8e8;"></div>
<div class="t" style="left:45px;top:504px;color:#333;font-size:5px;line-height:7px;">abc</div>
<div class="a" style="left:68px;top:504px;width:1px;height:7px;background:#444;"></div>
<div class="a" style="left:76px;top:507px;width:38px;height:2px;background:#161616;"></div>
<div class="a" style="left:115px;top:504px;width:3px;height:8px;background:#aaa;border-radius:1px;"></div>
<div class="a" style="left:72px;top:507px;width:3px;height:2px;background:#aaa;"></div>
<div class="a" style="left:120px;top:506px;width:6px;height:3px;background:#bbb;"></div>
<div class="a" style="left:127px;top:507px;width:2px;height:2px;background:#bbb;"></div>

</div>
</body></html>
